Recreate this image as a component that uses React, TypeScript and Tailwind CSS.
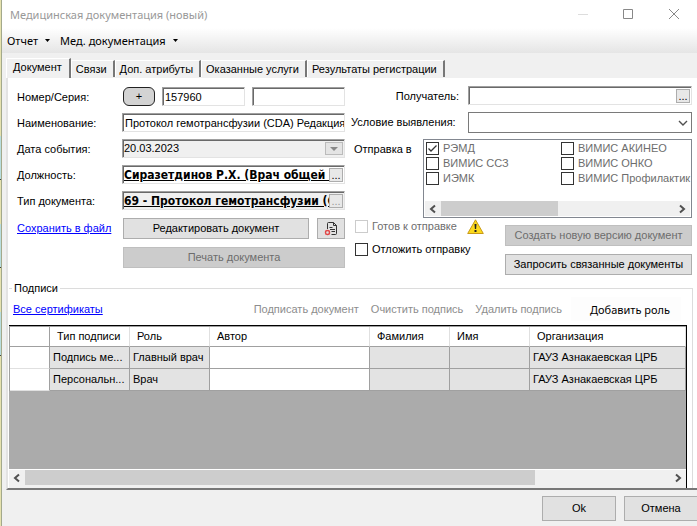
import React from 'react';
import clsx from 'clsx';

const ui = "font-['Liberation_Sans',Arial,sans-serif]";
const segoe = "font-['Noto_Sans','Open_Sans',sans-serif]";
const sunken = 'border border-[#e3e3e3] border-t-[#a0a0a0] border-l-[#a0a0a0] shadow-[inset_1px_1px_0_#696969]';

const tabs = ['Документ', 'Связи', 'Доп. атрибуты', 'Оказанные услуги', 'Результаты регистрации'];

const systems = [
  { id: 'remd', label: 'РЭМД', checked: true },
  { id: 'akineo', label: 'ВИМИС АКИНЕО', checked: false },
  { id: 'ssz', label: 'ВИМИС ССЗ', checked: false },
  { id: 'onko', label: 'ВИМИС ОНКО', checked: false },
  { id: 'iemk', label: 'ИЭМК', checked: false },
  { id: 'prof', label: 'ВИМИС Профилактик', checked: false },
];

const signatures = [
  { type: 'Подпись ме...', role: 'Главный врач', org: 'ГАУЗ Азнакаевская ЦРБ' },
  { type: 'Персональн...', role: 'Врач', org: 'ГАУЗ Азнакаевская ЦРБ' },
];

function Chevron({ dir }: { dir: 'left' | 'right' | 'down' }) {
  const paths = {
    left: 'M7 1.5 3 5l4 3.5',
    right: 'M3 1.5 7 5 3 8.5',
    down: 'M1 3l4 4 4-4',
  };
  return (
    <svg viewBox="0 0 10 10" className="h-2.5 w-2.5" fill="none" stroke="#505050" strokeWidth={dir === 'down' ? 1.4 : 2}>
      <path d={paths[dir]} />
    </svg>
  );
}

function ScrollBar({ thumb }: { thumb: string }) {
  return (
    <div className="flex h-[15px] shrink-0 bg-[#f0f0f0]">
      <button type="button" aria-label="Прокрутить влево" className="flex w-4 items-center justify-center">
        <Chevron dir="left" />
      </button>
      <div className="flex-1">
        <div className={clsx('h-full bg-[#cdcdcd]', thumb)} />
      </div>
      <button type="button" aria-label="Прокрутить вправо" className="flex w-4 items-center justify-center">
        <Chevron dir="right" />
      </button>
    </div>
  );
}

interface CheckProps {
  id: string;
  label: string;
  checked?: boolean;
  disabled?: boolean;
  className?: string;
}

function Check({ id, label, checked, disabled, className }: CheckProps) {
  return (
    <div className={clsx('flex items-center gap-1 whitespace-nowrap', className)}>
      <span className="grid h-[13px] w-[13px] shrink-0">
        <input
          id={id}
          type="checkbox"
          defaultChecked={checked}
          disabled={disabled}
          className="h-[13px] w-[13px] appearance-none border border-[#333] bg-white [grid-area:1/1] disabled:border-[#ccc]"
        />
        {checked && (
          <svg viewBox="0 0 13 13" className="pointer-events-none h-[13px] w-[13px] [grid-area:1/1]" fill="none" stroke="#333" strokeWidth="1.3">
            <path d="M2.5 6.5 5 9l5.500-5.500" />
          </svg>
        )}
      </span>
      <label htmlFor={id}>{label}</label>
    </div>
  );
}

function PushButton({ children, disabled, className }: { children: React.ReactNode; disabled?: boolean; className?: string }) {
  return (
    <button
      type="button"
      disabled={disabled}
      className={clsx(
        'flex items-center justify-center border whitespace-nowrap',
        disabled ? 'border-[#bfbfbf] bg-[#ccc] text-[#6d6d6d]' : 'border-[#adadad] bg-[#e1e1e1]',
        className,
      )}
    >
      {children}
    </button>
  );
}

// Text box with a small "..." button inside its right edge
function PickerField({ id, value, disabled, bold }: { id: string; value?: string; disabled?: boolean; bold?: boolean }) {
  return (
    <div className={clsx('flex h-[19px] min-w-0 flex-1 items-center pt-px pr-px pl-px', sunken, disabled ? 'bg-[#f0f0f0]' : 'bg-white')}>
      <input
        id={id}
        defaultValue={value}
        readOnly={disabled}
        className={clsx('h-full min-w-0 flex-1 outline-none', bold && "font-['DejaVu_Sans_Condensed','DejaVu_Sans',sans-serif] text-[12px] font-bold underline")}
      />
      <button
        type="button"
        aria-label="Выбрать"
        className={clsx('flex h-[14px] w-[14px] items-center justify-center border border-[#adadad] bg-[#e8e8e8] leading-none', disabled && 'text-[#999]')}
      >
        ...
      </button>
    </div>
  );
}

function Field({ id, label, children }: { id: string; label: string; children: React.ReactNode }) {
  return (
    <div className="flex h-[19px] items-center">
      <label htmlFor={id} className="w-[105px] shrink-0 pt-px">{label}</label>
      {children}
    </div>
  );
}

function TitleBar() {
  return (
    <header className={clsx('flex h-7 items-center bg-white pl-2 text-[#999]', segoe)}>
      <h1 className="flex-1">Медицинская документация (новый)</h1>
      <button type="button" aria-label="Свернуть" className="flex h-7 w-[45px] items-center justify-center">
        <svg viewBox="0 0 10 10" className="h-2.5 w-2.5" stroke="#ddd"><path d="M0 5.500h10" /></svg>
      </button>
      <button type="button" aria-label="Развернуть" className="flex h-7 w-[46px] items-center justify-center">
        <svg viewBox="0 0 10 10" className="h-2.5 w-2.5" fill="none" stroke="#888"><path d="M.5.5h9v9h-9z" /></svg>
      </button>
      <button type="button" aria-label="Закрыть" className="flex h-7 w-[46px] items-center justify-center">
        <svg viewBox="0 0 10 10" className="h-2.5 w-2.5" stroke="#888"><path d="M0 0l10 10M10 0 0 10" /></svg>
      </button>
    </header>
  );
}

function MenuBar() {
  return (
    <nav className={clsx('flex h-[25px] items-center gap-2.5 bg-linear-to-b from-white to-[#e5e5e5] pl-[5px]', segoe)}>
      {['Отчет', 'Мед. документация'].map((item) => (
        <button key={item} type="button" className="flex items-center gap-[7px]">
          {item}
          <svg viewBox="0 0 5 3" className="h-[3px] w-[5px]"><path d="M0 0h5L2.500 3z" /></svg>
        </button>
      ))}
    </nav>
  );
}

function DocumentFields() {
  return (
    <div className="flex min-w-0 flex-col gap-[7px] pt-px">
      <Field id="number" label="Номер/Серия:">
        <button type="button" aria-label="Новый номер" className="ml-px flex h-[19px] w-8 shrink-0 items-center justify-center rounded-md border border-[#222] bg-[#d3d3d3]">+</button>
        <input id="number" defaultValue="157960" className={clsx('ml-[7px] h-[19px] w-[83px] bg-white px-0.5', sunken)} />
        <input aria-label="Серия" className={clsx('ml-[7px] h-[19px] min-w-0 flex-1 bg-white', sunken)} />
      </Field>
      <Field id="name" label="Наименование:">
        <input id="name" defaultValue="Протокол гемотрансфузии (CDA) Редакция" className={clsx('h-[19px] min-w-0 flex-1 bg-white pl-0.5', sunken)} />
      </Field>
      <Field id="date" label="Дата события:">
        <div className={clsx('flex h-[19px] min-w-0 flex-1 items-center bg-[#f0f0f0] pr-px pl-px', sunken)}>
          <input id="date" defaultValue="20.03.2023" readOnly className="min-w-0 flex-1 outline-none" />
          <button type="button" aria-label="Открыть календарь" className="flex h-[13px] w-[18px] items-center justify-center border border-[#bbb] bg-[#e4e4e4]">
            <svg viewBox="0 0 8 4" className="h-1 w-2" fill="#888"><path d="M0 0h8L4 4z" /></svg>
          </button>
        </div>
      </Field>
      <Field id="post" label="Должность:">
        <PickerField id="post" value="Сиразетдинов Р.Х. (Врач общей практики)" bold />
      </Field>
      <Field id="kind" label="Тип документа:">
        <PickerField id="kind" value="69 - Протокол гемотрансфузии (CDA) Редакция" bold disabled />
      </Field>
      <div className="mt-px flex items-center">
        <div className="w-[106px] shrink-0">
          <a href="#save" className="whitespace-nowrap text-[#0000ff] underline">Сохранить в файл</a>
        </div>
        <PushButton className="h-[21px] flex-1">Редактировать документ</PushButton>
        <button type="button" aria-label="Отменить документ" className="ml-2 flex h-[21px] w-7 items-center justify-center border border-[#adadad] bg-[#e1e1e1]">
          <svg viewBox="0 0 14 14" className="h-3.5 w-3.5" fill="none" stroke="#333">
            <path d="M3.500 7V1.500q0-1 1-1h5l3 3v8q0 1-1 1H7.500M9.500.5v3h3M5.500 5.500h3M6 7.500h5M7.500 9.500H11" />
            <circle cx="3.500" cy="10.500" r="2" stroke="#e04848" strokeWidth="1.400" />
            <path d="M1 8l1 1M6 8 5 9M1 13l1-1M6 13l-1-1" stroke="#e88" />
          </svg>
        </button>
      </div>
      <PushButton disabled className="mt-px ml-[106px] h-[21px]">Печать документа</PushButton>
    </div>
  );
}

function SendingFields() {
  return (
    <div className="flex min-w-0 flex-col">
      <div className="flex h-[19px] items-center">
        <label htmlFor="recipient" className="w-[117px] shrink-0 pt-px pr-[9px] text-right">Получатель:</label>
        <PickerField id="recipient" />
      </div>
      <div className="mt-[7px] flex h-[21px] items-center">
        <label htmlFor="condition" className="w-[117px] shrink-0 whitespace-nowrap">Условие выявления:</label>
        <div className="grid h-[21px] min-w-0 flex-1 items-center">
          <select id="condition" className="h-[21px] w-full appearance-none border border-[#7a7a7a] bg-white [grid-area:1/1]">
            <option></option>
          </select>
          <span className="pointer-events-none mr-1 justify-self-end [grid-area:1/1]"><Chevron dir="down" /></span>
        </div>
      </div>
      <div className="mt-[6px] flex">
        <span id="systems" className="w-[72px] shrink-0 pt-[3px] pl-[3px]">Отправка в</span>
        <div role="group" aria-labelledby="systems" className="flex h-[79px] min-w-0 flex-1 flex-col justify-between border border-[#828790] bg-white p-px">
          <div className="grid grid-cols-[135px_1fr] pl-px text-[#6d6d6d]">
            {systems.map((s) => (
              <Check key={s.id} id={s.id} label={s.label} checked={s.checked} className="h-[15px] min-w-0" />
            ))}
          </div>
          <ScrollBar thumb="w-[50%]" />
        </div>
      </div>
      <div className="mt-px flex justify-between">
        <div className="flex flex-col gap-2 pl-1">
          <div className="flex h-[15px] items-center gap-2.5">
            <Check id="ready" label="Готов к отправке" disabled className="text-[#6d6d6d]" />
            <svg viewBox="0 0 17 16" className="h-4 w-[17px]" role="img" aria-label="Внимание">
              <path d="M8.500 .8 16.300 14.500H.7z" fill="#fbd91c" stroke="#c99a18" strokeLinejoin="round" />
              <path d="M7.500 5h2l-.4 5H7.900zM7.500 11h2v2h-2z" fill="#222" />
            </svg>
          </div>
          <Check id="delay" label="Отложить отправку" />
        </div>
        <div className="mt-[6px] flex w-[187px] flex-col gap-2">
          <PushButton disabled className="h-[21px]">Создать новую версию документ</PushButton>
          <PushButton className="h-[21px]">Запросить связанные документы</PushButton>
        </div>
      </div>
    </div>
  );
}

function Signatures() {
  const cell = 'border-r border-b border-[#a0a0a0] px-[3px] font-normal whitespace-nowrap';
  const head = 'border-r border-b border-[#e0e0e0] border-b-[#a0a0a0] px-[7px] text-left font-normal whitespace-nowrap';
  return (
    <fieldset className="mr-1 flex min-w-0 flex-1 flex-col border-t border-r border-[#dcdcdc] pr-[5px]">
      <legend className="ml-[3px] h-4 px-0.5 leading-4">Подписи</legend>
      <div className="flex h-[29px] items-center pr-1.5 pb-[3px] pl-1">
        <a href="#certificates" className="text-[#0000ff] underline">Все сертификаты</a>
        <div className="ml-auto flex gap-3 text-[#8d8d8d]">
          <button type="button" disabled>Подписать документ</button>
          <button type="button" disabled>Очистить подпись</button>
          <button type="button" disabled>Удалить подпись</button>
        </div>
        <button type="button" className={clsx('ml-[9px] h-6 w-[110px] bg-[#fdfdfd] pl-2', segoe)}>Добавить роль</button>
      </div>
      <div className="flex flex-1 flex-col border-t border-r border-black bg-[#ababab]">
        <table className="w-full table-fixed border-separate border-spacing-0 border-t border-l border-[#a0a0a0] bg-white">
          <colgroup>
            <col className="w-10" />
            <col className="w-20" />
            <col className="w-20" />
            <col className="w-40" />
            <col className="w-20" />
            <col className="w-20" />
            <col />
          </colgroup>
          <thead>
            <tr className="h-5">
              <th className={clsx(head, 'border-r-[#a0a0a0]')} />
              <th className={head}>Тип подписи</th>
              <th className={head}>Роль</th>
              <th className={head}>Автор</th>
              <th className={head}>Фамилия</th>
              <th className={head}>Имя</th>
              <th className={head}>Организация</th>
            </tr>
          </thead>
          <tbody>
            {signatures.map((s) => (
              <tr key={s.role} className="h-[22px]">
                <td className={clsx(cell, 'border-b-[#e0e0e0]')} />
                <td className={clsx(cell, 'bg-[#e3e3e3]')}>{s.type}</td>
                <td className={clsx(cell, 'bg-[#e3e3e3]')}>{s.role}</td>
                <td className={cell} />
                <td className={clsx(cell, 'bg-[#e3e3e3]')} />
                <td className={clsx(cell, 'bg-[#e3e3e3]')} />
                <td className={clsx(cell, 'bg-[#e3e3e3]')}>{s.org}</td>
              </tr>
            ))}
          </tbody>
        </table>
        <div className="mt-auto border-t border-white bg-[#f0f0f0] pb-[3px]">
          <ScrollBar thumb="w-[79%]" />
        </div>
      </div>
    </fieldset>
  );
}

export default function App() {
  return (
    <div className={clsx('flex min-h-screen text-[11px] leading-[15px] text-black', ui)}>
      {/* Sliver of the window behind the dialog */}
      <div className="flex w-0.5 shrink-0 flex-col border-r border-[#a3a98c] bg-[#e6e2ae]">
        <div className="mt-[136px] h-11 border-b border-[#444] bg-[#b9dede]" />
        <div className="mt-11 h-11 border-b border-[#444] bg-[#b9dede]" />
        <div className="mt-11 h-11 border-b border-[#444] bg-[#b9dede]" />
      </div>
      <div className="flex min-w-0 flex-1 flex-col bg-[#f0f0f0]">
        <TitleBar />
        <MenuBar />
        <main className="ml-1 flex flex-1 flex-col">
          <div role="tablist" className="flex h-[25px] items-end">
            {tabs.map((tab, i) => (
              <button
                key={tab}
                type="button"
                role="tab"
                aria-selected={i === 0}
                className={clsx(
                  'border-t border-r-2 border-l border-t-white border-r-[#777] border-l-white whitespace-nowrap',
                  i === 0 ? 'h-5 pr-[7px] pb-0.5 pl-[6px]' : 'mb-px h-[17px] pr-[6px] pl-1',
                )}
              >
                {tab}
              </button>
            ))}
          </div>
          <div className="flex flex-1 flex-col border-b-2 border-l-2 border-[#777] border-l-[#e3e3e3] bg-white pl-px">
            <div className="grid grid-cols-[328fr_341fr] gap-[6px] pt-2 pr-[5px] pl-2">
              <DocumentFields />
              <SendingFields />
            </div>
            <div className="mt-[5px] flex flex-1 flex-col">
              <Signatures />
            </div>
          </div>
        </main>
        <footer className="flex h-9 items-center justify-end gap-2 overflow-hidden">
          <PushButton className="h-[25px] w-[74px]">Ok</PushButton>
          <PushButton className="h-[25px] w-[73px] border-r-0">Отмена</PushButton>
        </footer>
      </div>
    </div>
  );
}
